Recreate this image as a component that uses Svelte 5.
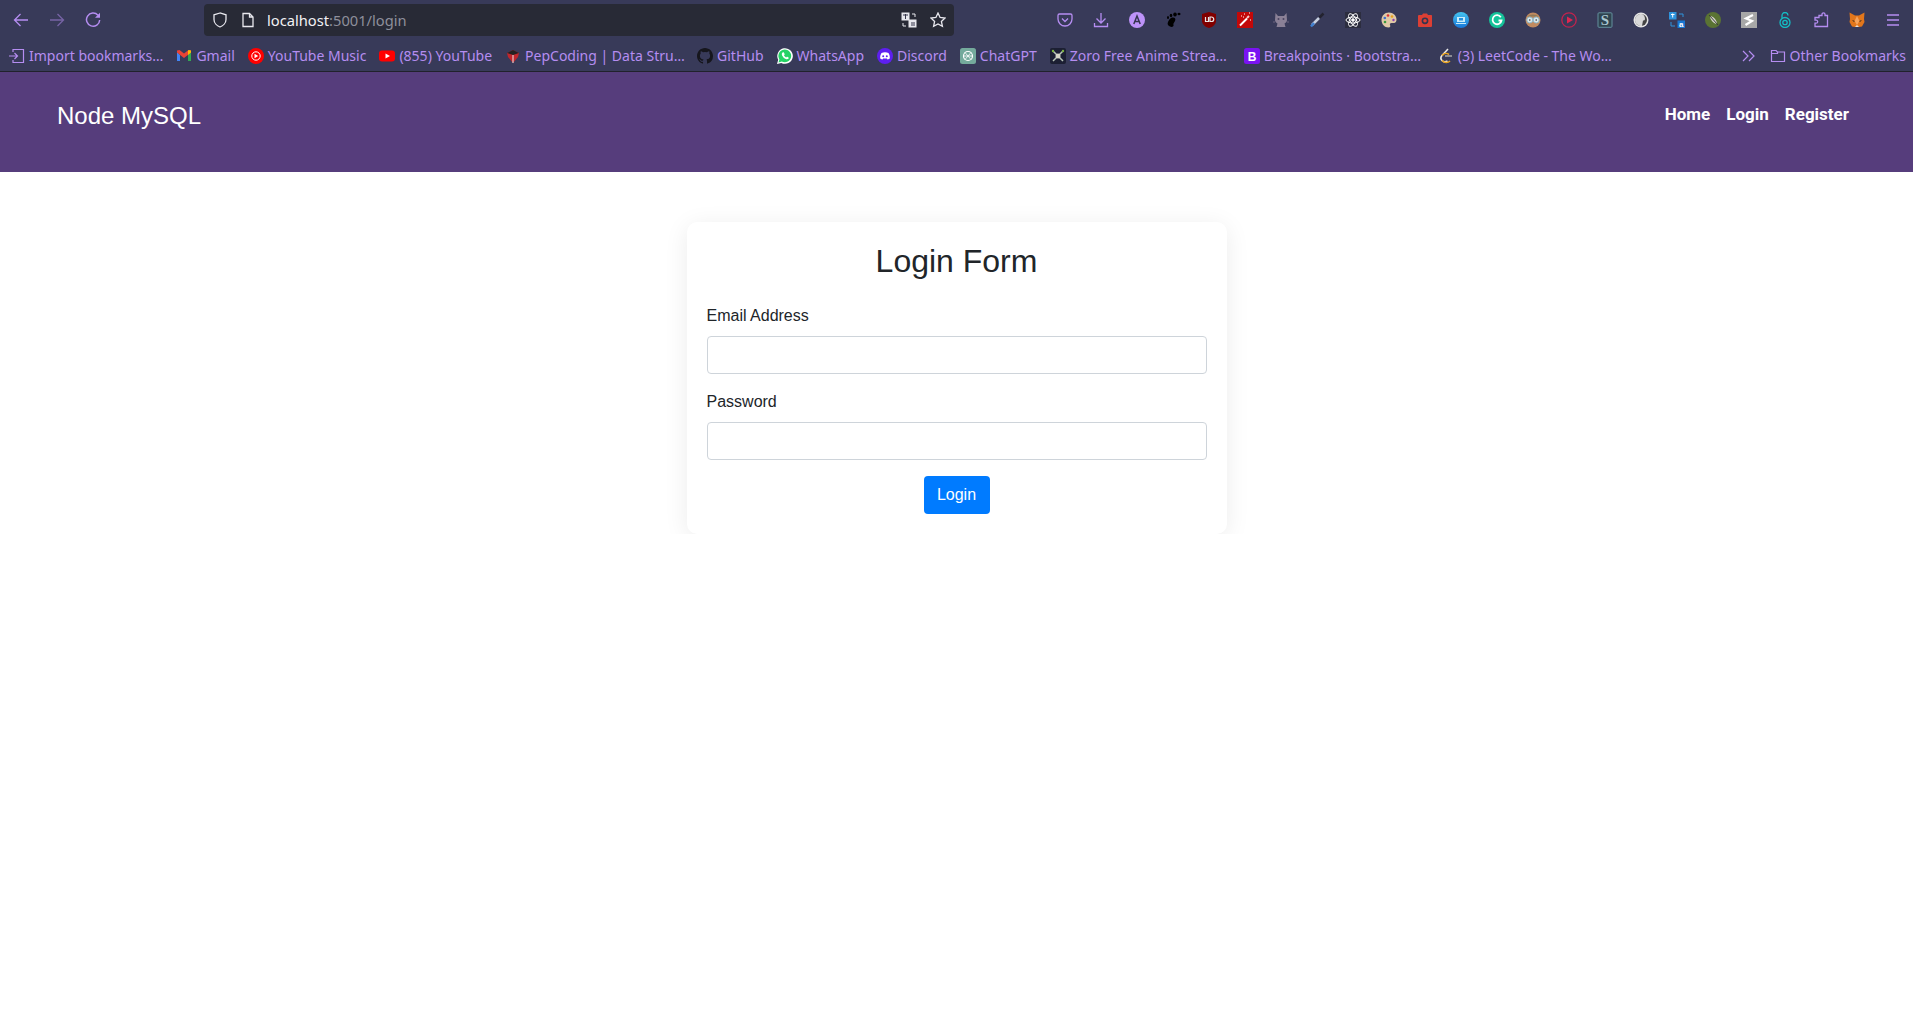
<script>
	let email = $state('');
	let password = $state('');
</script>

<div class="browser">
	<div class="toolbar">
		<div class="nav-btns">
			<button class="tb" aria-label="Back"><svg width="16" height="16" viewBox="0 0 16 16" fill="none" stroke="#b58df1" stroke-width="1.3"><path d="M15 8H1.500M7.500 2 1.500 8l6 6"/></svg></button>
			<button class="tb dim" aria-label="Forward"><svg width="16" height="16" viewBox="0 0 16 16" fill="none" stroke="#b58df1" stroke-width="1.3"><path d="M1 8h13.500M8.500 2l6 6-6 6"/></svg></button>
			<button class="tb" aria-label="Reload"><svg width="16" height="16" viewBox="0 0 16 16" fill="none" stroke="#b58df1" stroke-width="1.5"><path d="M13 3.200A6.600 6.600 0 1 0 14.700 8"/><path d="M15 .8v5h-5z" fill="#b58df1" stroke="none"/></svg></button>
		</div>
		<div class="urlbar">
			<svg width="16" height="16" viewBox="0 0 16 16" fill="none" stroke="#e8e8ee" stroke-width="1.3"><path d="M8 1 2 2.800v4.600C2 11 5 14 8 15c3-1 6-4 6-7.600V2.800z"/></svg>
			<svg width="16" height="16" viewBox="0 0 16 16" fill="none" stroke="#e8e8ee" stroke-width="1.3"><path d="M3 1.500h6.500L13 5v9.500H3zM9.500 1.500V5H13"/></svg>
			<span class="url"><span class="host">localhost</span>:5001/login</span>
			<span class="url-end">
				<svg width="16" height="16" viewBox="0 0 16 16"><rect x="0.500" y="0.500" width="8" height="8" fill="#e8e8ee"/><rect x="7.500" y="7.500" width="8" height="8" fill="#e8e8ee"/><path d="M2 3h5M4.500 2v5M11 10v4M13 10v4" stroke="#34354a" fill="none"/><path d="M11 2h3v3M2 11v3h3" stroke="#e8e8ee" fill="none"/></svg>
				<svg width="16" height="16" viewBox="0 0 16 16" fill="none" stroke="#e8e8ee" stroke-width="1.3"><path d="m8 1 2.100 4.500 4.900.6-3.600 3.300 1 4.900L8 11.900l-4.400 2.400 1-4.900L1 6.100l4.900-.6z"/></svg>
			</span>
		</div>
		<div class="extensions">
			<button class="tb" aria-label="Pocket"><svg width="16" height="16" viewBox="0 0 16 16" fill="none" stroke="#b58df1" stroke-width="1.3"><path d="M2.500 2h11A1.500 1.500 0 0 1 15 3.500V7A7 7 0 0 1 1 7V3.500A1.500 1.500 0 0 1 2.500 2z"/><path d="m5 6.500 3 3 3-3"/></svg></button>
			<button class="tb" aria-label="Downloads"><svg width="16" height="16" viewBox="0 0 16 16" fill="none" stroke="#b58df1" stroke-width="1.3"><path d="M8 1v10M3.500 6.500 8 11l4.500-4.500M1.500 11v3.500h13V11"/></svg></button>
			<button class="tb" aria-label="Account"><svg width="16" height="16" viewBox="0 0 16 16"><circle cx="8" cy="8" r="8" fill="#bd93f9"/><path d="M4.800 12 8 4l3.200 8M6 9.500h4" stroke="#34354f" stroke-width="1.500" fill="none"/></svg></button>
			<button class="tb" aria-label="Gnome"><svg width="16" height="16" viewBox="0 0 16 16" fill="#000"><path d="M7 5.500c3-.5 4 1.500 3 3.500s-2 2.500-1.500 4-1.500 2.500-3.500 1.500S2 12 3 10s2-4 4-4.500z"/><ellipse cx="3" cy="5.500" rx="1" ry="1.500"/><ellipse cx="6" cy="3.500" rx="1.300" ry="1.800"/><ellipse cx="10" cy="2.500" rx="1.800" ry="2"/><ellipse cx="14" cy="2" rx="1.500" ry="1.200"/></svg></button>
			<button class="tb" aria-label="uBlock"><svg width="16" height="16" viewBox="0 0 16 16"><path d="M8 0 1 2v7c0 3 3 6 7 7 4-1 7-4 7-7V2z" fill="#800000"/><path d="M4.500 5v4.500h3V5M9 5v4.500h1.500a2.200 2.200 0 0 0 0-4.500z" fill="none" stroke="#e8e8e8" stroke-width="1.200"/></svg></button>
			<button class="tb" aria-label="Wand"><svg width="16" height="16" viewBox="0 0 16 16"><rect width="16" height="16" fill="#c30808"/><path d="m3 13.500 7-7" stroke="#fff" stroke-width="2"/><path d="m10 6 2-2" stroke="#f5c8c8" stroke-width="2"/><path d="M4 4h1M7 2h1M13 8h1M12 1h1M6 5h1" stroke="#fff"/></svg></button>
			<button class="tb" aria-label="Cat"><svg width="16" height="16" viewBox="0 0 16 16" fill="#8a8096"><path d="M2.500 1 5 4h6l2.500-3 .5 7c0 2-1.500 3-2.500 3.500l1 3.500h-9l1-3.500C3.500 11 2 10 2 8z"/><path d="M2 10H0M14 10h2" stroke="#6d6580"/><circle cx="5.500" cy="7" r="1" fill="#4a4360"/><circle cx="10.500" cy="7" r="1" fill="#4a4360"/></svg></button>
			<button class="tb" aria-label="Pen"><svg width="16" height="16" viewBox="0 0 16 16"><path d="M3 13 10 6" stroke="#c8d0e0" stroke-width="2.500"/><path d="M2 14.500 5 11" stroke="#3f7fd0" stroke-width="2.500"/><path d="m10.500 5.500 4-4" stroke="#23232f" stroke-width="2.500"/></svg></button>
			<button class="tb" aria-label="React tools"><svg width="16" height="16" viewBox="0 0 16 16" fill="none" stroke="#fff"><rect width="16" height="16" fill="#2c2d3f" stroke="none"/><ellipse cx="8" cy="8" rx="7" ry="3"/><ellipse cx="8" cy="8" rx="7" ry="3" transform="rotate(60 8 8)"/><ellipse cx="8" cy="8" rx="7" ry="3" transform="rotate(120 8 8)"/><circle cx="8" cy="8" r="1.300" fill="#fff"/></svg></button>
			<button class="tb" aria-label="Palette"><svg width="16" height="16" viewBox="0 0 16 16"><path d="M8 .5C3.500.5.500 4 .500 8s3 7.500 7 7.500c2 0 2-1.500 1.500-2.500s0-2 1.500-2h2.500c1.500 0 2.500-1.500 2.500-3.500C15.500 3.500 12 .5 8 .5z" fill="#e0c9a6"/><circle cx="7" cy="3.500" r="1.300" fill="#d33"/><circle cx="11" cy="4.500" r="1.300" fill="#e9a21e"/><circle cx="3.800" cy="6" r="1.300" fill="#3a6fd0"/><circle cx="4" cy="10" r="1.300" fill="#3a9a40"/><circle cx="12.500" cy="8" r="1.200" fill="#8a3fb0"/></svg></button>
			<button class="tb" aria-label="Screenshot"><svg width="16" height="16" viewBox="0 0 16 16"><path d="M1.500 3H5l1-1.500h4L11 3h3.500A1 1 0 0 1 15 4v10a1 1 0 0 1-1 1H2a1 1 0 0 1-1-1V4z" fill="#dc3f34"/><circle cx="8" cy="8.800" r="2.600" fill="none" stroke="#34354f" stroke-width="1.600"/></svg></button>
			<button class="tb" aria-label="Screen capture"><svg width="16" height="16" viewBox="0 0 16 16"><defs><linearGradient id="cap" x1="0" y1="0" x2="0" y2="1"><stop offset="0" stop-color="#45c4f0"/><stop offset="1" stop-color="#1877d8"/></linearGradient></defs><circle cx="8" cy="8" r="8" fill="url(#cap)"/><path d="M4 5h8v5H4z" fill="#c8ecfa"/><path d="M3 11.500h10" stroke="#c8ecfa"/><rect x="6" y="6" width="4" height="2.500" fill="#2590dd"/></svg></button>
			<button class="tb" aria-label="Grammarly"><svg width="16" height="16" viewBox="0 0 16 16"><circle cx="8" cy="8" r="8" fill="#15c39a"/><path d="M11.800 5.200A4.500 4.500 0 1 0 12.500 8.500H9.500" fill="none" stroke="#fff" stroke-width="1.800"/></svg></button>
			<button class="tb" aria-label="Glasses"><svg width="16" height="16" viewBox="0 0 16 16"><circle cx="8" cy="8" r="7.500" fill="#c08a60"/><path d="M2.500 4.500a6.500 4.500 0 0 1 11 0z" fill="#8f7a58"/><circle cx="4.800" cy="8" r="3" fill="#dbe8ec" stroke="#8fb7c7"/><circle cx="11.200" cy="8" r="3" fill="#dbe8ec" stroke="#8fb7c7"/><circle cx="4.800" cy="8" r=".8" fill="#333"/><circle cx="11.200" cy="8" r=".8" fill="#333"/></svg></button>
			<button class="tb" aria-label="Player"><svg width="16" height="16" viewBox="0 0 16 16"><circle cx="8" cy="8" r="7.200" fill="none" stroke="#c2234d" stroke-width="1.300"/><path d="M6 4.500v7L12 8z" fill="#e0264f"/></svg></button>
			<button class="tb" aria-label="Snippets"><svg width="16" height="16" viewBox="0 0 16 16"><rect x="1" y="0.800" width="14" height="14.500" rx="1" fill="#2f4450" stroke="#64909f"/><text x="8" y="13" class="s-glyph">S</text></svg></button>
			<button class="tb" aria-label="Dark Reader"><svg width="16" height="16" viewBox="0 0 16 16"><circle cx="8" cy="8" r="7.500" fill="#e4e4e4"/><circle cx="8" cy="8" r="6" fill="#444"/><path d="M8 2c-2.500 0-4 2-4 5 0 1 1 1.500 2 1.500L7 14h1c3 0 6-2.500 6-6s-3-6-6-6z" fill="#d8d8d8" transform="matrix(-1 0 0 1 16 0)"/></svg></button>
			<button class="tb" aria-label="Translate"><svg width="16" height="16" viewBox="0 0 16 16"><rect width="7.500" height="7.500" fill="#2f93dc"/><rect x="8.500" y="8.500" width="7.500" height="7.500" fill="#1976d2"/><path d="M2 2.500h3.500M3.700 1.500v4" stroke="#fff" fill="none"/><text x="12.200" y="14.500" class="a-glyph">a</text><path d="M10 2h4v3M2 10v4h4" stroke="#2f93dc" fill="none"/></svg></button>
			<button class="tb" aria-label="Feather"><svg width="16" height="16" viewBox="0 0 16 16"><circle cx="8" cy="8" r="8" fill="#5a7333"/><path d="M5 4c3 0 7 4 7 8-3 0-7-4-7-8z" fill="#d4d4c8"/><path d="m4 3 9 10" stroke="#3b3b3b"/></svg></button>
			<button class="tb" aria-label="Stylus"><svg width="16" height="16" viewBox="0 0 16 16"><rect width="16" height="16" fill="#a7a7a7"/><path d="M12 3 5 6.500l6 2.500-6.500 4" fill="none" stroke="#fff" stroke-width="2.200"/></svg></button>
			<button class="tb" aria-label="Lock"><svg width="16" height="16" viewBox="0 0 16 16" fill="none" stroke="#14bcc4" stroke-width="1.300"><path d="M5 6V3.500a3 3 0 0 1 6 0"/><circle cx="8" cy="10.500" r="5"/><circle cx="8" cy="10.500" r="2.200"/></svg></button>
			<button class="tb" aria-label="Extensions"><svg width="16" height="16" viewBox="0 0 16 16" fill="none" stroke="#b58df1" stroke-width="1.300"><path d="M6 3.500h3V2.300a1.500 1.500 0 0 1 3 0v1.200h2.500v11H2v-3.300h1.200a1.500 1.500 0 0 0 0-3H2V5.500h4z"/></svg></button>
			<button class="tb" aria-label="MetaMask"><svg width="16" height="16" viewBox="0 0 16 16"><path d="M.5.500 6 3.500h4L15.500.500 15 7l.5 3-2.500 4.500-3 .5H6l-3-.5L.5 10 1 7z" fill="#e2761b"/><path d="M6 15l2-2 2 2z" fill="#e6e0d8"/><path d="M3 8l3 1-1 1zM13 8l-3 1 1 1z" fill="#33261f"/><path d="m8 4-2.500 5L8 13l2.500-4z" fill="#f6a35b"/></svg></button>
			<button class="tb" aria-label="Menu"><svg width="16" height="16" viewBox="0 0 16 16" fill="none" stroke="#b58df1" stroke-width="1.300"><path d="M2 3h12M2 8h12M2 13h12"/></svg></button>
		</div>
	</div>

	<div class="bookmarks">
		<div class="marks">
			<span class="mark"><svg width="16" height="16" viewBox="0 0 16 16" fill="none" stroke="#b58df1" stroke-width="1.200"><path d="M0 8h8.500M5.500 5l3 3-3 3M4 4V1.500h10.500v13H4V12"/></svg>Import bookmarks…</span>
			<span class="mark"><svg width="16" height="16" viewBox="0 0 16 16"><path d="M1 4v9h3V7z" fill="#4285f4"/><path d="M12 7v6h3V4z" fill="#34a853"/><path d="M1 2.500v2L8 10l7-5.500v-2L12.500 2 8 5.500 3.500 2z" fill="#ea4335"/><path d="M12.500 2 15 2.500v2L12 7V3z" fill="#fbbc04"/></svg>Gmail</span>
			<span class="mark"><svg width="16" height="16" viewBox="0 0 16 16"><circle cx="8" cy="8" r="8" fill="#f00"/><circle cx="8" cy="8" r="4.200" fill="none" stroke="#fff"/><path d="M6.500 5.800v4.400L10.200 8z" fill="#fff"/></svg>YouTube Music</span>
			<span class="mark"><svg width="16" height="16" viewBox="0 0 16 16"><rect y="2.500" width="16" height="11" rx="3" fill="#f00"/><path d="M6.500 5.500v5L11 8z" fill="#fff"/></svg>(855) YouTube</span>
			<span class="mark trunc"><svg width="16" height="16" viewBox="0 0 16 16"><path d="M2 5l6-3 6 3-1 4-5 6-5-6z" fill="#c0262c"/><path d="M2 5l6-3 6 3-6 2z" fill="#222"/><path d="M8 7v8" stroke="#e9e9e9"/></svg>PepCoding | Data Stru…</span>
			<span class="mark"><svg width="16" height="16" viewBox="0 0 16 16"><path fill="#16161d" d="M8 0C3.580 0 0 3.580 0 8c0 3.540 2.290 6.530 5.470 7.590.4.070.55-.17.550-.38v-1.340c-2.230.48-2.700-1.070-2.700-1.070-.36-.93-.89-1.170-.89-1.170-.73-.5.050-.49.050-.49.800.06 1.230.82 1.230.82.710 1.220 1.870.87 2.330.66.070-.52.280-.87.510-1.070-1.780-.2-3.640-.89-3.640-3.950 0-.87.310-1.590.820-2.150-.08-.2-.36-1.020.08-2.120 0 0 .67-.21 2.200.82a7.600 7.600 0 0 1 4 0c1.530-1.040 2.200-.82 2.200-.82.440 1.100.160 1.920.08 2.120.510.560.820 1.270.820 2.150 0 3.070-1.870 3.750-3.650 3.950.290.250.540.730.540 1.480v2.200c0 .21.150.46.550.38A8.010 8.010 0 0 0 16 8c0-4.420-3.580-8-8-8z"/></svg>GitHub</span>
			<span class="mark"><svg width="16" height="16" viewBox="0 0 16 16"><path d="M0 16l1.200-4.200A7.800 7.800 0 1 1 4.300 14.900z" fill="#fff"/><path d="m1.500 14.500.9-3.100A6.400 6.400 0 1 1 4.800 13.600z" fill="#25d366"/><path d="M5.600 4.500c-.8.700-1 1.800-.5 2.900a8 8 0 0 0 3.700 3.700c1.100.4 2.200.2 2.800-.6.300-.4.200-.9-.1-1.100l-1.200-.7c-.3-.1-.5 0-.7.200l-.4.500c-.9-.3-1.800-1.200-2.200-2.100l.5-.5c.2-.2.200-.4.100-.7l-.6-1.300c-.3-.5-.8-.6-1.400-.3z" fill="#fff"/></svg>WhatsApp</span>
			<span class="mark"><svg width="16" height="16" viewBox="0 0 16 16"><circle cx="8" cy="8" r="8" fill="#5e1ff0"/><path d="M4.500 5c2-1 5-1 7 0 1 1.500 1.500 3.500 1.300 5.500-1 .7-1.800 1-2.300 1l-.6-.9H6.100l-.6.900c-.5 0-1.300-.3-2.300-1C3 8.500 3.500 6.500 4.500 5z" fill="#fff"/><circle cx="6.200" cy="8.300" r="1" fill="#5e1ff0"/><circle cx="9.800" cy="8.300" r="1" fill="#5e1ff0"/></svg>Discord</span>
			<span class="mark"><svg width="16" height="16" viewBox="0 0 16 16"><rect width="16" height="16" rx="2.500" fill="#74aa9c"/><circle cx="8" cy="8" r="4.500" fill="none" stroke="#fff" stroke-width="1.200"/><path d="M5 4.500 11 11.500M11 4.500 5 11.500M3.500 8h9" stroke="#fff" stroke-width=".8"/></svg>ChatGPT</span>
			<span class="mark trunc long"><svg width="16" height="16" viewBox="0 0 16 16"><rect width="16" height="16" rx="2" fill="#1c1f33"/><path d="M3 3 13 13M13 3 3 13" stroke="#b8c4b8" stroke-width="1.500"/><circle cx="8" cy="8" r="2.500" fill="#d6d6c8"/><circle cx="3" cy="3" r="1.200" fill="#7cb342"/><circle cx="13" cy="3" r="1.200" fill="#7cb342"/></svg>Zoro Free Anime Strea…</span>
			<span class="mark trunc long"><svg width="16" height="16" viewBox="0 0 16 16"><rect width="16" height="16" rx="2.500" fill="#7a13f2"/><text x="8" y="12.500" class="b-glyph">B</text></svg>Breakpoints · Bootstra…</span>
			<span class="mark trunc"><svg width="16" height="16" viewBox="0 0 16 16" fill="none"><path d="M10 1 4 7.500c-1.500 1.800-1.500 3.500 0 5s3.800 1.500 5.500.5" stroke="#e8e8e8" stroke-width="1.600"/><path d="M7 8h7" stroke="#a8a8a8" stroke-width="1.500"/><path d="M4 7.500C6 5 9 5 11 6.500" stroke="#e8a21c" stroke-width="1.600"/><path d="M4 12.500C6 15 10 15 12 13" stroke="#e8a21c" stroke-width="1.600"/></svg>(3) LeetCode - The Wo…</span>
		</div>
		<div class="other">
			<svg width="14" height="14" viewBox="0 0 14 14" fill="none" stroke="#b58df1" stroke-width="1.200"><path d="m1 2 5 5-5 5M7 2l5 5-5 5"/></svg>
			<span class="mark"><svg width="16" height="16" viewBox="0 0 16 16" fill="none" stroke="#b58df1" stroke-width="1.200"><path d="M1.500 13.500v-11h4.500L7.500 4h7v9.500z"/><path d="M1.500 5.500h6L7.500 4"/></svg>Other Bookmarks</span>
		</div>
	</div>
</div>

<nav class="navbar">
	<a class="brand" href="/">Node MySQL</a>
	<ul class="links">
		<li><a href="/">Home</a></li>
		<li><a href="/login">Login</a></li>
		<li><a href="/register">Register</a></li>
	</ul>
</nav>

<main class="page">
	<form class="card" onsubmit={(e) => e.preventDefault()}>
		<h1>Login Form</h1>
		<div class="field">
			<label for="email">Email Address</label>
			<input id="email" type="email" bind:value={email} />
		</div>
		<div class="field">
			<label for="password">Password</label>
			<input id="password" type="password" bind:value={password} />
		</div>
		<button class="submit" type="submit">Login</button>
	</form>
</main>

<style>
	:global(body) {
		background: #fff;
		color: #212529;
		font-family: "Liberation Sans", Arial, sans-serif;
	}

	.browser {
		background: #383a59;
		font-family: "Noto Sans", sans-serif;
		color: #b58df1;
		border-bottom: 1px solid #21222c;
	}
	.browser svg {
		display: block;
		flex: none;
	}
	.toolbar {
		display: flex;
		align-items: center;
		height: 40px;
	}
	.nav-btns {
		display: flex;
		padding-left: 3px;
	}
	.tb {
		display: flex;
		align-items: center;
		justify-content: center;
		width: 36px;
		height: 32px;
		padding: 0;
		border: 0;
		background: none;
	}
	.dim {
		opacity: 0.5;
	}
	.urlbar {
		display: flex;
		align-items: center;
		gap: 12px;
		width: 750px;
		height: 32px;
		margin-left: 93px;
		padding: 0 8px;
		box-sizing: border-box;
		background: #282a36;
		border-radius: 4px;
		font-size: 14.7px;
		color: #8e8f9b;
	}
	.url {
		margin-left: -1px;
	}
	.host {
		color: #f1f1f4;
	}
	.url-end {
		display: flex;
		align-items: center;
		gap: 13px;
		margin-left: auto;
	}
	.extensions {
		display: flex;
		margin-left: auto;
		margin-right: 2px;
	}
	.s-glyph {
		font: bold 15px "Liberation Serif", serif;
		fill: #a8c6d0;
		text-anchor: middle;
	}
	.a-glyph {
		font: bold 8px "Liberation Sans", sans-serif;
		fill: #fff;
		text-anchor: middle;
	}
	.b-glyph {
		font: bold 12px "Liberation Sans", sans-serif;
		fill: #fff;
		text-anchor: middle;
	}

	.bookmarks {
		display: flex;
		justify-content: space-between;
		align-items: center;
		height: 31px;
		padding: 0 7px 0 9px;
		font-size: 14px;
		white-space: nowrap;
	}
	.marks,
	.other {
		display: flex;
		align-items: center;
	}
	.marks {
		gap: 13px;
	}
	.other {
		gap: 14px;
	}
	.mark {
		display: flex;
		align-items: center;
		gap: 4px;
	}
	.trunc {
		width: 179px;
	}
	.long {
		width: 181px;
	}

	.navbar {
		display: flex;
		justify-content: space-between;
		align-items: flex-start;
		height: 100px;
		box-sizing: border-box;
		padding: 30px 64px 0 57px;
		background: #563d7c;
	}
	.brand {
		color: #fff;
		font-size: 24px;
		line-height: 28px;
		text-decoration: none;
	}
	.links {
		display: flex;
		gap: 16px;
		margin: 0;
		padding: 0;
		list-style: none;
	}
	.links a {
		color: #fff;
		font: 700 17px/24px Roboto, sans-serif;
		text-decoration: none;
	}

	.page {
		display: flex;
		justify-content: center;
		padding-top: 50px;
	}
	.card {
		display: flex;
		flex-direction: column;
		width: 540px;
		box-sizing: border-box;
		padding: 20px;
		background: #fff;
		border-radius: 10px;
		box-shadow: 0 4px 24px rgba(0, 0, 0, 0.08);
	}
	h1 {
		margin: 0 0 24px;
		font-size: 32px;
		font-weight: 400;
		line-height: 38px;
		text-align: center;
	}
	.field {
		margin-bottom: 16px;
	}
	label {
		display: block;
		margin-bottom: 8px;
		font-size: 16px;
		line-height: 24px;
	}
	input {
		display: block;
		width: 100%;
		height: 38px;
		box-sizing: border-box;
		border: 1px solid #ced4da;
		border-radius: 4px;
		background: #fff;
	}
	.submit {
		align-self: center;
		width: 66px;
		height: 38px;
		padding: 0;
		border: 0;
		border-radius: 4px;
		background: #007bff;
		color: #fff;
		font: 16px "Liberation Sans", Arial, sans-serif;
	}
</style>
